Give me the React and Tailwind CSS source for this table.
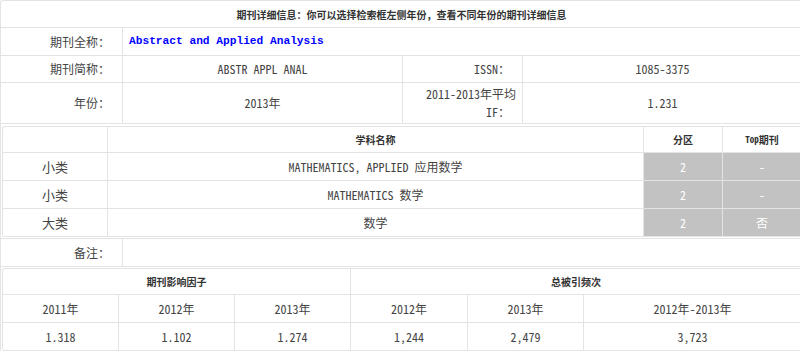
import React from "react";

const F = { fontFamily: '"Noto Sans Mono CJK SC", "Liberation Mono", "Noto Sans CJK SC", monospace' };

const subjects = [
  { type: "小类", name: "MATHEMATICS, APPLIED 应用数学", zone: "2", top: "-" },
  { type: "小类", name: "MATHEMATICS 数学", zone: "2", top: "-" },
  { type: "大类", name: "数学", zone: "2", top: "否" },
];

const years = ["2011年", "2012年", "2013年", "2012年", "2013年", "2012年-2013年"];
const values = ["1.318", "1.102", "1.274", "1,244", "2,479", "3,723"];

export default function App() {
  const cell = "border-r border-b border-[#e3e3e3] flex items-center";
  const head = "text-[10px] font-bold text-[#333]";

  return (
    <div className="w-[800px] h-[351px] overflow-hidden bg-white text-[12px] text-[#444]" style={F}>
      <div className="w-[803px] border-l border-t border-[#e3e3e3] rounded-tl-[3px]">
        {/* title */}
        <div className={`h-[27px] justify-center ${cell} ${head}`}>
          期刊详细信息：你可以选择检索框左侧年份，查看不同年份的期刊详细信息
        </div>

        <div className="grid grid-cols-[122px_280px_120px_1fr]">
          <div className={`h-[28px] justify-end pr-[12px] ${cell}`}>期刊全称：</div>
          <div className={`col-span-3 h-[28px] pl-[6px] ${cell}`}>
            <span className="font-['Liberation_Mono'] font-bold text-[11.2px] text-[#0000ff]">
              Abstract and Applied Analysis
            </span>
          </div>

          <div className={`h-[27px] justify-end pr-[12px] ${cell}`}>期刊简称：</div>
          <div className={`h-[27px] justify-center ${cell}`}>ABSTR APPL ANAL</div>
          <div className={`h-[27px] justify-end pr-[12px] ${cell}`}>ISSN：</div>
          <div className={`h-[27px] justify-center ${cell}`}>1085-3375</div>

          <div className={`h-[41px] justify-end pr-[12px] ${cell}`}>年份：</div>
          <div className={`h-[41px] justify-center ${cell}`}>2013年</div>
          <div className={`h-[41px] justify-end pr-[6px] text-right ${cell}`}>
            <div className="flex flex-col items-end">
              <div className="leading-[18px] h-[18px]">2011-2013年平均</div>
              <div className="leading-[18px] h-[18px] pr-[6px]">IF：</div>
            </div>
          </div>
          <div className={`h-[41px] justify-center ${cell}`}>1.231</div>
        </div>

        {/* subject table */}
        <div className="border-r border-b border-[#e3e3e3] pl-px pt-[2px] pb-px">
          <div className="border-l border-t border-[#e3e3e3] rounded-[3px] grid grid-cols-[105px_536px_79px_1fr]">
            <div className={`h-[26px] ${cell}`}></div>
            <div className={`h-[26px] justify-center ${cell} ${head}`}>学科名称</div>
            <div className={`h-[26px] justify-center ${cell} ${head}`}>分区</div>
            <div className={`h-[26px] justify-center ${cell} ${head}`}>
              <span className="text-[9px]">Top</span>期刊
            </div>
            {subjects.map((s, i) => (
              <React.Fragment key={i}>
                <div className={`h-[28px] justify-center text-[13px] ${cell}`}>{s.type}</div>
                <div className={`h-[28px] justify-center ${cell}`}>{s.name}</div>
                <div className={`h-[28px] justify-center bg-[#c2c2c2] text-white ${cell}`}>{s.zone}</div>
                <div className={`h-[28px] justify-center bg-[#c2c2c2] text-white ${cell}`}>{s.top}</div>
              </React.Fragment>
            ))}
          </div>
        </div>

        <div className="grid grid-cols-[122px_1fr]">
          <div className={`h-[28px] justify-end pr-[12px] ${cell}`}>备注：</div>
          <div className={`h-[28px] ${cell}`}></div>
        </div>

        {/* impact table */}
        <div className="border-r border-b border-[#e3e3e3] pl-px pt-px pb-[2px]">
          <div className="border-l border-t border-[#e3e3e3] rounded-[3px] grid grid-cols-[116px_116px_116px_117px_116px_1fr]">
            <div className={`col-span-3 h-[26px] justify-center ${cell} ${head}`}>期刊影响因子</div>
            <div className={`col-span-3 h-[26px] justify-center ${cell} ${head}`}>总被引频次</div>
            {years.map((y, i) => (
              <div key={i} className={`h-[28px] justify-center ${cell}`}>{y}</div>
            ))}
            {values.map((v, i) => (
              <div key={i} className={`h-[28px] justify-center ${cell}`}>{v}</div>
            ))}
          </div>
        </div>
      </div>
    </div>
  );
}
